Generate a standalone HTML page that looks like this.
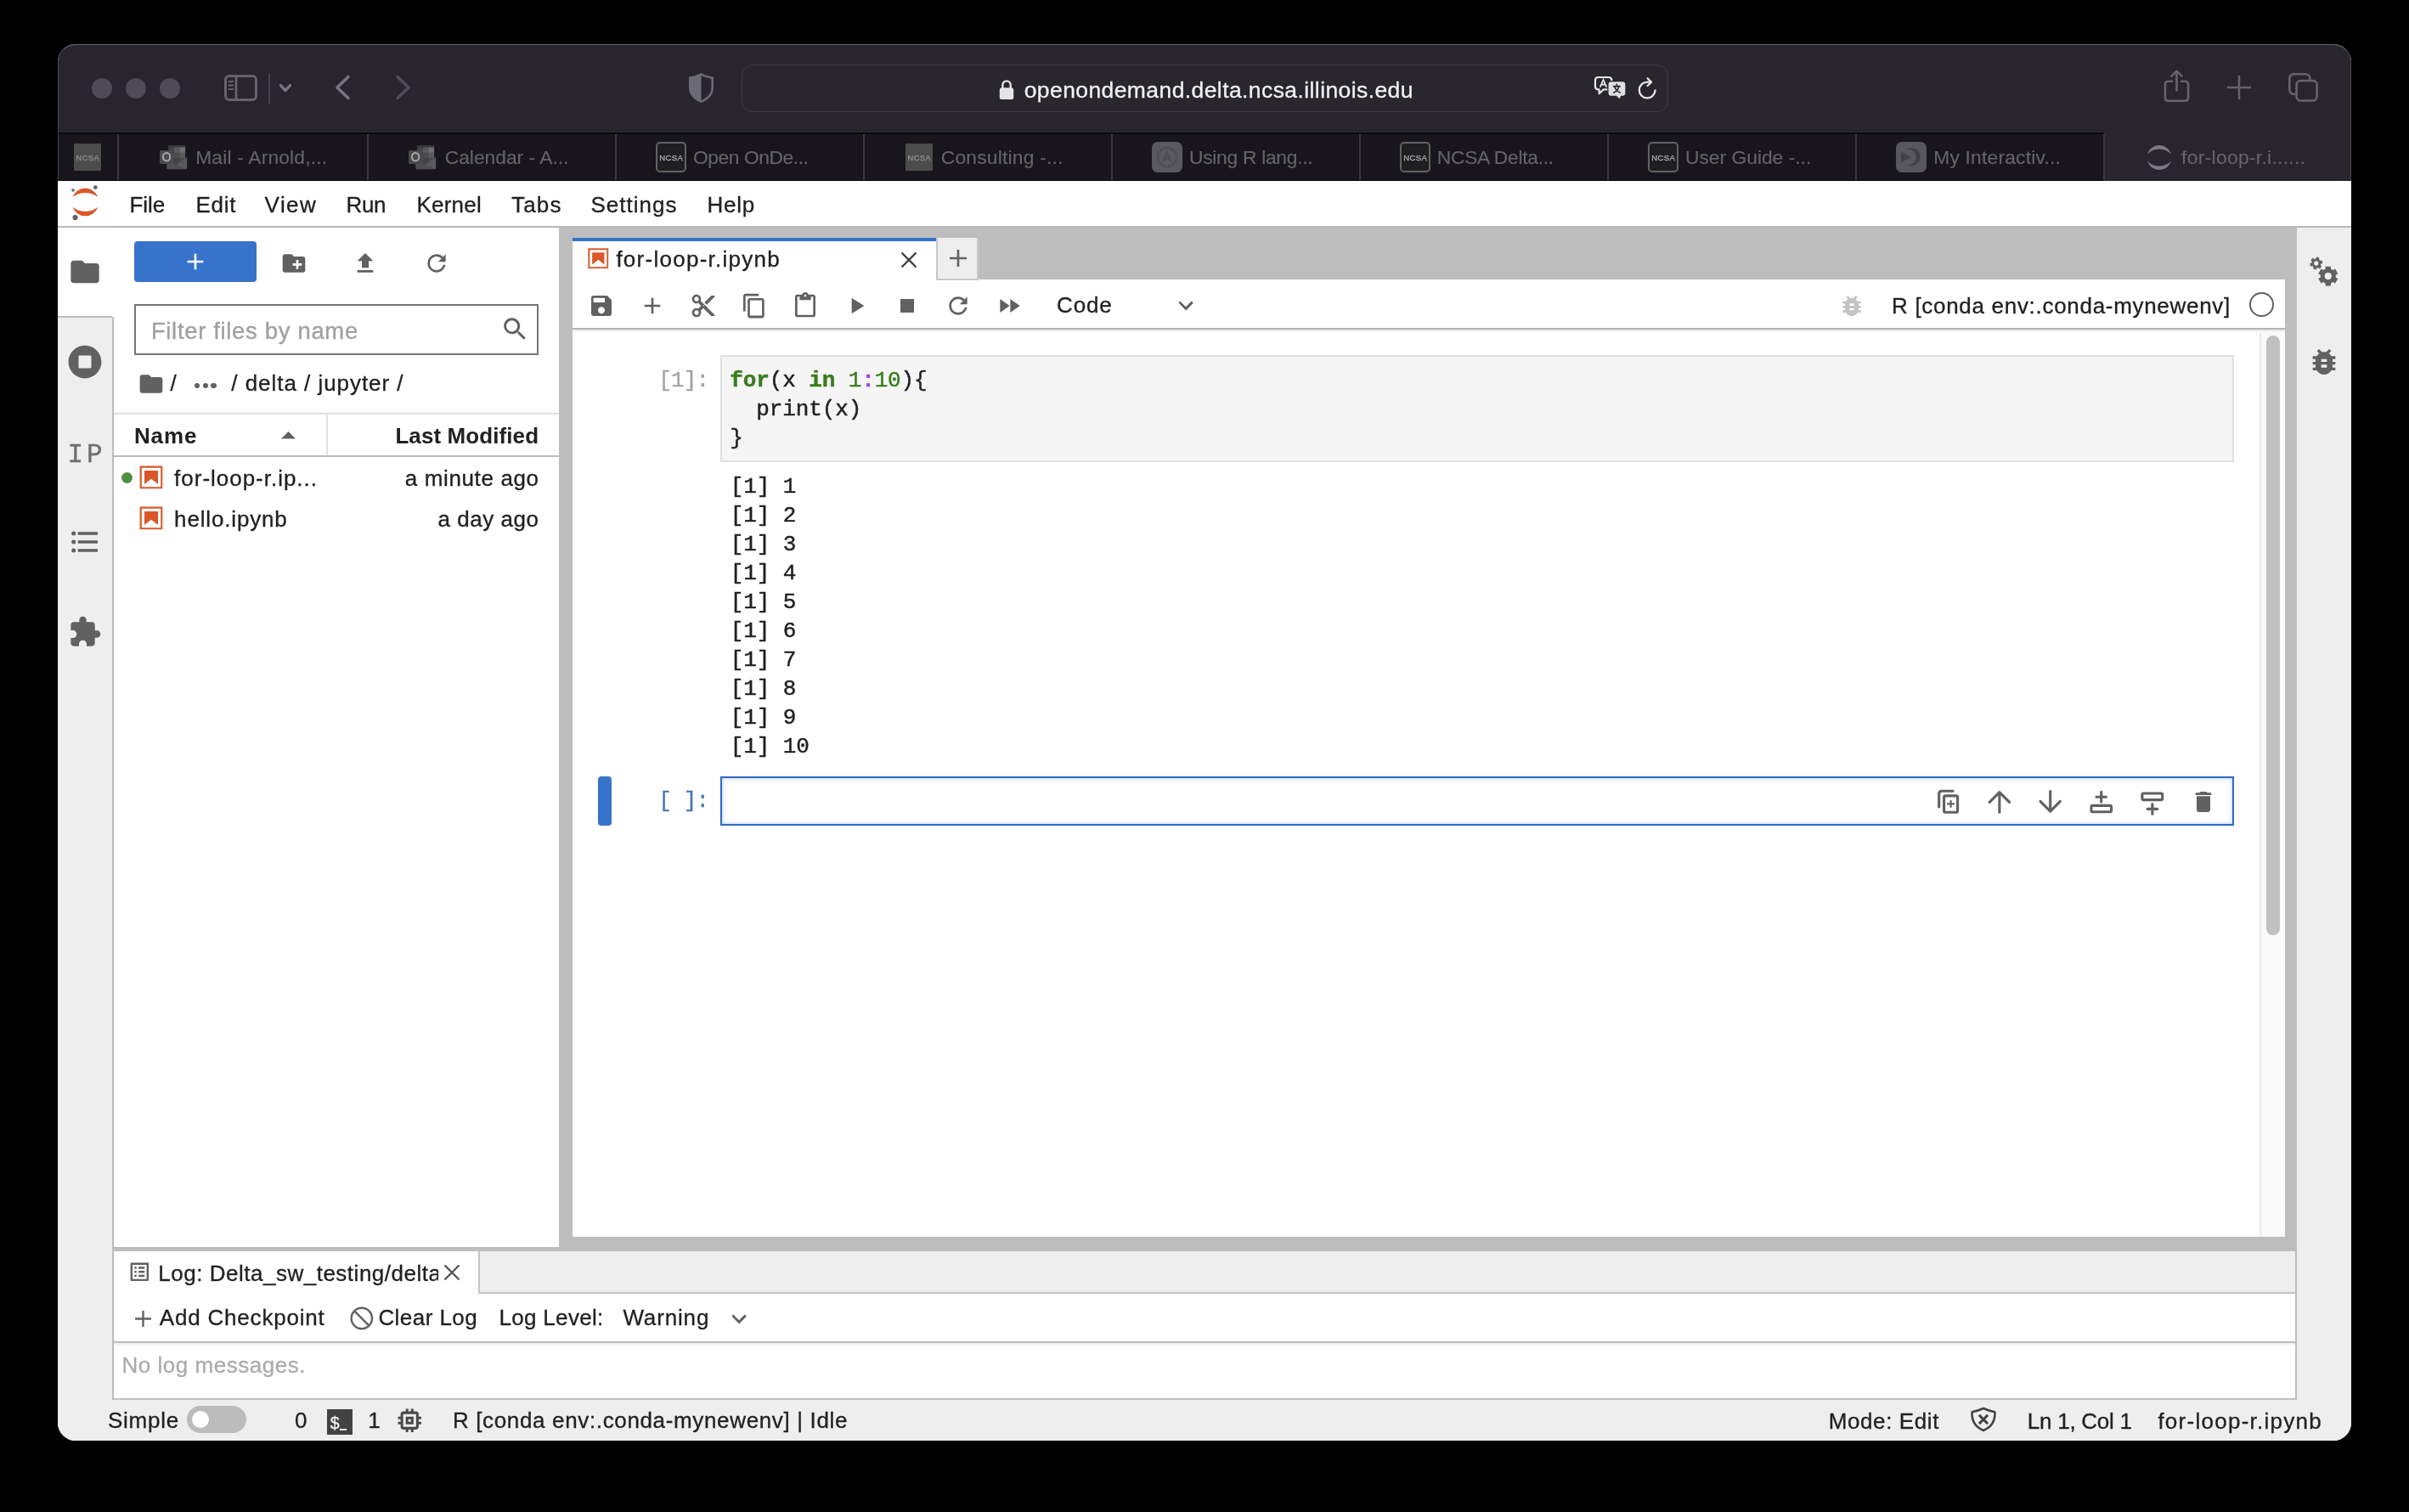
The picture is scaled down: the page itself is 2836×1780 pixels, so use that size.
<!DOCTYPE html><html><head><meta charset="utf-8"><title>JupyterLab</title><style>
*{box-sizing:border-box;margin:0;padding:0}
html,body{width:2836px;height:1780px;background:#000;overflow:hidden}
body{position:relative;font-family:"Liberation Sans",sans-serif}
.a{position:absolute}
.t{position:absolute;white-space:pre;display:block;-webkit-text-stroke:0.3px}
.m{-webkit-text-stroke:0.45px}
svg{position:absolute;overflow:visible}
#win{will-change:transform;position:absolute;left:68px;top:52px;width:2700px;height:1644px;border-radius:21px;overflow:hidden;background:#fff}
</style></head><body><div id="win"><div class="a" style="left:-68px;top:-52px;width:2836px;height:1780px">
<div class="a" style="left:68px;top:52px;width:2700px;height:104px;background:#28252f"></div>
<div class="a" style="left:68px;top:156px;width:2700px;height:57px;background:#18161c"></div>
<div class="a" style="left:68px;top:155.5px;width:2409px;height:2px;background:#0b0a0e"></div>
<div class="a" style="left:68px;top:211.5px;width:2700px;height:1.5px;background:#08070a"></div>
<div class="a" style="left:2477px;top:156px;width:291px;height:57px;background:#28252f"></div>
<div class="a" style="left:138px;top:158px;width:2px;height:54px;background:#3a3842"></div>
<div class="a" style="left:432px;top:158px;width:2px;height:54px;background:#3a3842"></div>
<div class="a" style="left:724px;top:158px;width:2px;height:54px;background:#3a3842"></div>
<div class="a" style="left:1016px;top:158px;width:2px;height:54px;background:#3a3842"></div>
<div class="a" style="left:1308px;top:158px;width:2px;height:54px;background:#3a3842"></div>
<div class="a" style="left:1600px;top:158px;width:2px;height:54px;background:#3a3842"></div>
<div class="a" style="left:1892px;top:158px;width:2px;height:54px;background:#3a3842"></div>
<div class="a" style="left:2184px;top:158px;width:2px;height:54px;background:#3a3842"></div>
<div class="a" style="left:2476px;top:158px;width:2px;height:54px;background:#3a3842"></div>
<div class="a" style="left:68px;top:52px;width:2700px;height:160px;border:1.6px solid #4b4854;border-top-color:#65626e;border-bottom:none;border-radius:21px 21px 0 0"></div>
<div class="a" style="left:107.8px;top:91.8px;width:24.4px;height:24.4px;border-radius:50%;background:#4e4b57"></div>
<div class="a" style="left:147.8px;top:91.8px;width:24.4px;height:24.4px;border-radius:50%;background:#4e4b57"></div>
<div class="a" style="left:187.8px;top:91.8px;width:24.4px;height:24.4px;border-radius:50%;background:#4e4b57"></div>
<div class="a" style="left:872.5px;top:76px;width:1091px;height:56px;border:1.7px solid #403d48;border-radius:13px;background:#29262f"></div>
<div class="a" style="left:68px;top:213px;width:2700px;height:55px;background:#fff;border-bottom:2px solid #b9b9b9"></div>
<div class="a" style="left:68px;top:268px;width:2700px;height:1380px;background:#bdbdbd"></div>
<div class="a" style="left:68px;top:268px;width:66px;height:1380px;background:#eeeeee;border-right:2px solid #bdbdbd"></div>
<div class="a" style="left:68px;top:268px;width:66px;height:105px;background:#fff"></div>
<div class="a" style="left:68px;top:372px;width:64px;height:2px;background:#bdbdbd"></div>
<div class="a" style="left:134px;top:268px;width:524px;height:1200px;background:#fff"></div>
<div class="a" style="left:2702px;top:268px;width:66px;height:1380px;background:#eeeeee;border-left:2px solid #bdbdbd"></div>
<div class="a" style="left:674px;top:280px;width:2016px;height:1176px;background:#fff"></div>
<div class="a" style="left:134px;top:1473px;width:2568px;height:175px;background:#fff"></div>
<div class="a" style="left:68px;top:1648px;width:2700px;height:48px;background:#eeeeee"></div>
<svg style="left:264px;top:87.5px" width="39" height="31" viewBox="0 0 39 31"><rect x="1.5" y="1.5" width="36" height="28" rx="4.5" fill="none" stroke="#66636c" stroke-width="3"/><path d="M14 1.5V29.5" stroke="#66636c" stroke-width="2.8"/><path d="M5.6 8H10.2M5.6 12.5H10.2M5.6 17H10.2" stroke="#66636c" stroke-width="1.9" stroke-linecap="round"/></svg>
<div class="a" style="left:315.8px;top:86px;width:2px;height:35.5px;background:#45424d"></div>
<svg style="left:329px;top:99.3px" width="14" height="10" viewBox="0 0 14 10"><path d="M1.4 1.5L7 7.6L12.6 1.5" fill="none" stroke="#7a7782" stroke-width="3.2" stroke-linecap="round" stroke-linejoin="round"/></svg>
<svg style="left:395px;top:89px" width="17" height="28" viewBox="0 0 17 28"><path d="M15 1.5L2 14L15 26.5" fill="none" stroke="#77747f" stroke-width="3.6" stroke-linecap="round" stroke-linejoin="round"/></svg>
<svg style="left:466px;top:89px" width="17" height="28" viewBox="0 0 17 28"><path d="M2 1.5L15 14L2 26.5" fill="none" stroke="#4f4c58" stroke-width="3.6" stroke-linecap="round" stroke-linejoin="round"/></svg>
<svg style="left:811px;top:86px" width="29" height="35" viewBox="0 0 29 35"><path d="M14.5 1.3C10 3.6 5.5 5 1.3 5.6V17C1.3 25 7 30.5 14.5 33.6C22 30.5 27.7 25 27.7 17V5.6C23.5 5 19 3.6 14.5 1.3z" fill="none" stroke="#6c6976" stroke-width="2.6" stroke-linejoin="round"/><path d="M14.5 1.3C10 3.6 5.5 5 1.3 5.6V17C1.3 25 7 30.5 14.5 33.6z" fill="#6c6976"/></svg>
<svg style="left:1176px;top:93px" width="18" height="25" viewBox="0 0 18 25"><path d="M4.3 11V7.2C4.3 0.8 13.7 0.8 13.7 7.2V11" fill="none" stroke="#e4e4e6" stroke-width="2.4"/><rect x="0.8" y="10.2" width="16.4" height="13.8" rx="2.6" fill="#e4e4e6"/></svg>
<span class="t" id="t0" style="left:1205.7px;top:90.2px;font:400 26.5px/32px 'Liberation Sans',sans-serif;color:#f2f2f4;letter-spacing:0.41px;">openondemand.delta.ncsa.illinois.edu</span>
<svg style="left:1876px;top:89px" width="40" height="30" viewBox="0 0 40 30"><path d="M5.5 2H17.8C19.9 2 21.3 3.4 21.3 5.5V12.8C21.3 14.9 19.9 16.3 17.8 16.3H11.8L6.6 21.2V16.3H5.5C3.4 16.3 2 14.9 2 12.8V5.5C2 3.4 3.4 2 5.5 2z" fill="none" stroke="#e6e6e8" stroke-width="2.2" stroke-linejoin="round"/><path d="M7.7 13.6L11.5 4.9L15.3 13.6M9.1 10.7H13.9" fill="none" stroke="#e6e6e8" stroke-width="1.8"/><path d="M20.6 6.7H34.3C36.4 6.7 38 8.3 38 10.4V20.7C38 22.8 36.4 24.4 34.3 24.4H32.6L30.8 28.3L26.6 24.4H20.6C18.5 24.4 16.9 22.8 16.9 20.7V10.4C16.9 8.3 18.5 6.7 20.6 6.7z" fill="#dfdfe1" stroke="#28252f" stroke-width="1.3"/><path d="M22.9 12.6H31.8M27 9.6L27.8 12.4M30 12.6C29 16.5 26 19.2 23.1 20.2M24.6 12.8C26 16.6 29 19.3 31.8 20.2" fill="none" stroke="#28252f" stroke-width="1.6"/></svg>
<svg style="left:1928px;top:91px" width="23" height="27" viewBox="0 0 23 27"><path d="M20.6 15.3A9.4 9.4 0 1 1 11.5 5.6H14.5" fill="none" stroke="#e6e6e8" stroke-width="2.3" stroke-linecap="round"/><path d="M11.6 1.2L16 5.6L11.6 10" fill="none" stroke="#e6e6e8" stroke-width="2.3" stroke-linecap="round" stroke-linejoin="round"/></svg>
<svg style="left:2547px;top:82px" width="31" height="39" viewBox="0 0 31 39"><path d="M10 13.8H5.6C3.2 13.8 1.9 15.1 1.9 17.5V33C1.9 35.4 3.2 36.7 5.6 36.7H25.4C27.8 36.7 29.1 35.4 29.1 33V17.5C29.1 15.1 27.8 13.8 25.4 13.8H21" fill="none" stroke="#66636c" stroke-width="2.6" stroke-linecap="round"/><path d="M15.5 24.5V2M9.5 7.5L15.5 1.6L21.5 7.5" fill="none" stroke="#66636c" stroke-width="2.6" stroke-linecap="round" stroke-linejoin="round"/></svg>
<svg style="left:2622px;top:89px" width="28" height="28" viewBox="0 0 28 28"><path d="M14 1V27M1 14H27" stroke="#66636c" stroke-width="2.6" stroke-linecap="round"/></svg>
<svg style="left:2693px;top:85px" width="37" height="36" viewBox="0 0 37 36"><rect x="2.3" y="2.3" width="24" height="23.5" rx="5" fill="none" stroke="#66636c" stroke-width="2.6"/><rect x="10.6" y="10" width="24" height="23.5" rx="5" fill="#28252f" stroke="#66636c" stroke-width="2.6"/></svg>
<span class="t" id="t1" style="left:230.2px;top:172.3px;font:400 22.8px/27px 'Liberation Sans',sans-serif;color:#66636c;letter-spacing:0.18px;-webkit-text-stroke:0.12px;">Mail - Arnold,...</span>
<span class="t" id="t2" style="left:523.7px;top:172.3px;font:400 22.8px/27px 'Liberation Sans',sans-serif;color:#66636c;-webkit-text-stroke:0.12px;">Calendar - A...</span>
<span class="t" id="t3" style="left:815.9px;top:172.3px;font:400 22.8px/27px 'Liberation Sans',sans-serif;color:#66636c;letter-spacing:-0.42px;-webkit-text-stroke:0.12px;">Open OnDe...</span>
<span class="t" id="t4" style="left:1107.8px;top:172.3px;font:400 22.8px/27px 'Liberation Sans',sans-serif;color:#66636c;letter-spacing:0.21px;-webkit-text-stroke:0.12px;">Consulting -...</span>
<span class="t" id="t5" style="left:1400.0px;top:172.3px;font:400 22.8px/27px 'Liberation Sans',sans-serif;color:#66636c;letter-spacing:-0.28px;-webkit-text-stroke:0.12px;">Using R lang...</span>
<span class="t" id="t6" style="left:1691.8px;top:172.3px;font:400 22.8px/27px 'Liberation Sans',sans-serif;color:#66636c;letter-spacing:-0.28px;-webkit-text-stroke:0.12px;">NCSA Delta...</span>
<span class="t" id="t7" style="left:1984.0px;top:172.3px;font:400 22.8px/27px 'Liberation Sans',sans-serif;color:#66636c;-webkit-text-stroke:0.12px;">User Guide -...</span>
<span class="t" id="t8" style="left:2276.2px;top:172.3px;font:400 22.8px/27px 'Liberation Sans',sans-serif;color:#66636c;letter-spacing:0.21px;-webkit-text-stroke:0.12px;">My Interactiv...</span>
<span class="t" id="t9" style="left:2568.1px;top:172.3px;font:400 22.8px/27px 'Liberation Sans',sans-serif;color:#66636c;letter-spacing:0.31px;-webkit-text-stroke:0.12px;">for-loop-r.i......</span>
<div class="a" style="left:87px;top:169px;width:32px;height:32px;background:#4c4c4c"></div>
<span class="t" id="t10" style="left:89.6px;top:180.4px;font:400 9.4px/11px 'Liberation Sans',sans-serif;color:#919191;letter-spacing:0.36px;-webkit-text-stroke:0.25px;">NCSA</span>
<svg style="left:187.9px;top:171px" width="32.2" height="28.2" viewBox="0 0 32.2 28.2"><rect x="10.2" y="0.2" width="19.9" height="24" rx="1" fill="#444446"/><rect x="10.2" y="0.2" width="19.9" height="2.4" rx="1" fill="#3a3a3c"/><rect x="16.9" y="2.6" width="6.8" height="6.3" fill="#59595b"/><rect x="23.7" y="2.6" width="6.4" height="6.3" fill="#707072"/><rect x="16.9" y="8.9" width="6.8" height="6" fill="#4e4e50"/><rect x="23.7" y="8.9" width="6.4" height="6" fill="#5c5c5e"/><rect x="16.9" y="14.9" width="6.8" height="8" fill="#434345"/><rect x="23.7" y="14.9" width="6.4" height="6" fill="#4b4b4d"/><path d="M8.2 17L20 23.4L32.1 13.9V26.6C32.1 27.5 31.4 28.2 30.5 28.2H9.8C8.9 28.2 8.2 27.5 8.2 26.6z" fill="#4f4f51"/><path d="M32.1 13.9V26.6C32.1 27.3 31.8 27.8 31.3 28L19.6 23.1z" fill="#5a5a5c"/><rect x="0" y="5.9" width="16.4" height="16" rx="1.6" fill="#4a4a4c"/><ellipse cx="8.1" cy="13.8" rx="4.2" ry="4.7" fill="none" stroke="#a9a9ab" stroke-width="2"/></svg>
<svg style="left:481.4px;top:171px" width="32.2" height="28.2" viewBox="0 0 32.2 28.2"><rect x="10.2" y="0.2" width="19.9" height="24" rx="1" fill="#444446"/><rect x="10.2" y="0.2" width="19.9" height="2.4" rx="1" fill="#3a3a3c"/><rect x="16.9" y="2.6" width="6.8" height="6.3" fill="#59595b"/><rect x="23.7" y="2.6" width="6.4" height="6.3" fill="#707072"/><rect x="16.9" y="8.9" width="6.8" height="6" fill="#4e4e50"/><rect x="23.7" y="8.9" width="6.4" height="6" fill="#5c5c5e"/><rect x="16.9" y="14.9" width="6.8" height="8" fill="#434345"/><rect x="23.7" y="14.9" width="6.4" height="6" fill="#4b4b4d"/><path d="M8.2 17L20 23.4L32.1 13.9V26.6C32.1 27.5 31.4 28.2 30.5 28.2H9.8C8.9 28.2 8.2 27.5 8.2 26.6z" fill="#4f4f51"/><path d="M32.1 13.9V26.6C32.1 27.3 31.8 27.8 31.3 28L19.6 23.1z" fill="#5a5a5c"/><rect x="0" y="5.9" width="16.4" height="16" rx="1.6" fill="#4a4a4c"/><ellipse cx="8.1" cy="13.8" rx="4.2" ry="4.7" fill="none" stroke="#a9a9ab" stroke-width="2"/></svg>
<div class="a" style="left:772px;top:167px;width:36px;height:36px;background:#1f1f21;border:2px solid #626266;border-radius:5px"></div>
<span class="t" id="t11" style="left:776.2px;top:180.1px;font:400 9.6px/12px 'Liberation Sans',sans-serif;color:#b4b4b6;letter-spacing:0.37px;-webkit-text-stroke:0.25px;">NCSA</span>
<div class="a" style="left:1066px;top:169px;width:32px;height:32px;background:#4c4c4c"></div>
<span class="t" id="t12" style="left:1068.6px;top:180.4px;font:400 9.4px/11px 'Liberation Sans',sans-serif;color:#919191;letter-spacing:0.36px;-webkit-text-stroke:0.25px;">NCSA</span>
<div class="a" style="left:1356px;top:167px;width:36px;height:36px;background:#5b5960;border-radius:7px"></div>
<svg style="left:1360px;top:171px" width="28" height="28" viewBox="0 0 28 28"><circle cx="14" cy="14" r="11" fill="none" stroke="#514f56" stroke-width="3"/><path d="M9.5 19.5L14 8.5L18.5 19.5M11 16H17" fill="none" stroke="#4f4d54" stroke-width="2.4"/></svg>
<div class="a" style="left:1648px;top:167px;width:36px;height:36px;background:#1f1f21;border:2px solid #626266;border-radius:5px"></div>
<span class="t" id="t13" style="left:1652.2px;top:180.1px;font:400 9.6px/12px 'Liberation Sans',sans-serif;color:#b4b4b6;letter-spacing:0.37px;-webkit-text-stroke:0.25px;">NCSA</span>
<div class="a" style="left:1940px;top:167px;width:36px;height:36px;background:#1f1f21;border:2px solid #626266;border-radius:5px"></div>
<span class="t" id="t14" style="left:1944.2px;top:180.1px;font:400 9.6px/12px 'Liberation Sans',sans-serif;color:#b4b4b6;letter-spacing:0.37px;-webkit-text-stroke:0.25px;">NCSA</span>
<div class="a" style="left:2232px;top:167px;width:36px;height:36px;background:#59575e;border-radius:7px"></div>
<svg style="left:2232px;top:167px" width="36" height="36" viewBox="0 0 36 36"><path d="M6 11.5L17 18L6 24.5z" fill="#434148"/><path d="M12 8.5C22 4.5 30 11 28.6 19.5C27.5 26 20 30 12 27.5C19 27.8 23.5 23.5 23.5 18C23.5 12.5 19 8.4 12 8.5z" fill="#434148"/></svg>
<svg style="left:2527px;top:169.5px" width="30" height="31" viewBox="0 0 30 31"><path d="M1 11.5C6 -2.5 24 -2.5 29 11.5C22 3.5 8 3.5 1 11.5z" fill="#7d7a85"/><path d="M1 19.5C6 33.5 24 33.5 29 19.5C22 27.5 8 27.5 1 19.5z" fill="#7d7a85"/></svg>
<span class="t" id="t15" style="left:152.4px;top:226.3px;font:400 26px/31px 'Liberation Sans',sans-serif;color:#212121;">File</span>
<span class="t" id="t16" style="left:230.4px;top:226.3px;font:400 26px/31px 'Liberation Sans',sans-serif;color:#212121;letter-spacing:0.77px;">Edit</span>
<span class="t" id="t17" style="left:311.6px;top:226.3px;font:400 26px/31px 'Liberation Sans',sans-serif;color:#212121;letter-spacing:1.44px;">View</span>
<span class="t" id="t18" style="left:407.4px;top:226.3px;font:400 26px/31px 'Liberation Sans',sans-serif;color:#212121;letter-spacing:-0.29px;">Run</span>
<span class="t" id="t19" style="left:490.4px;top:226.3px;font:400 26px/31px 'Liberation Sans',sans-serif;color:#212121;letter-spacing:0.23px;">Kernel</span>
<span class="t" id="t20" style="left:602.0px;top:226.3px;font:400 26px/31px 'Liberation Sans',sans-serif;color:#212121;letter-spacing:1.20px;">Tabs</span>
<span class="t" id="t21" style="left:695.4px;top:226.3px;font:400 26px/31px 'Liberation Sans',sans-serif;color:#212121;letter-spacing:1.02px;">Settings</span>
<span class="t" id="t22" style="left:832.4px;top:226.3px;font:400 26px/31px 'Liberation Sans',sans-serif;color:#212121;letter-spacing:0.81px;">Help</span>
<svg style="left:80px;top:214px" width="44" height="50" viewBox="80 214 44 50"><path d="M85.6 232A15.68 15.68 0 0 1 115.2 232A24.8 24.8 0 0 0 85.6 232z" fill="#d9582a"/><path d="M85.6 243.7A15.6 15.6 0 0 0 115.2 243.7A23.7 23.7 0 0 1 85.6 243.7z" fill="#d9582a"/><circle cx="112.3" cy="220.6" r="2.4" fill="#616161"/><circle cx="88.5" cy="256.1" r="3.1" fill="#616161"/><circle cx="86" cy="223.9" r="1.8" fill="#6a6a6a"/></svg>
<svg style="left:80.0px;top:300.0px" width="40" height="40" viewBox="0 0 24 24" ><path d="M10 4H4c-1.1 0-1.99.9-1.99 2L2 18c0 1.1.9 2 2 2h16c1.1 0 2-.9 2-2V8c0-1.1-.9-2-2-2h-8l-2-2z" fill="#616161" /></svg>
<svg style="left:80.0px;top:405.5px" width="40" height="40" viewBox="0 0 512 512" ><path d="M256 8C119 8 8 119 8 256s111 248 248 248 248-111 248-248S393 8 256 8zm96 328c0 8.8-7.2 16-16 16H176c-8.8 0-16-7.2-16-16V176c0-8.8 7.2-16 16-16h160c8.8 0 16 7.2 16 16v160z" fill="#616161" /></svg>
<span class="t" id="t23" style="left:79.5px;top:517.2px;font:400 31px/37px 'Liberation Mono',monospace;color:#6e6e6e;letter-spacing:3.78px;">IP</span>
<svg style="left:80.0px;top:618.0px" width="40" height="40" viewBox="0 0 24 24" ><path d="M7,5H21V7H7V5M7,13V11H21V13H7M4,4.5A1.5,1.5 0 0,1 5.5,6A1.5,1.5 0 0,1 4,7.5A1.5,1.5 0 0,1 2.5,6A1.5,1.5 0 0,1 4,4.5M4,10.5A1.5,1.5 0 0,1 5.5,12A1.5,1.5 0 0,1 4,13.5A1.5,1.5 0 0,1 2.5,12A1.5,1.5 0 0,1 4,10.5M7,19V17H21V19H7M4,16.5A1.5,1.5 0 0,1 5.5,18A1.5,1.5 0 0,1 4,19.5A1.5,1.5 0 0,1 2.5,18A1.5,1.5 0 0,1 4,16.5Z" fill="#616161" /></svg>
<svg style="left:80.0px;top:724.0px" width="40" height="40" viewBox="0 0 24 24" ><path d="M20.5 11H19V7c0-1.1-.9-2-2-2h-4V3.5C13 2.12 11.88 1 10.5 1S8 2.12 8 3.5V5H4c-1.1 0-1.99.9-1.99 2v3.8H3.5c1.49 0 2.7 1.21 2.7 2.7s-1.21 2.7-2.7 2.7H2V20c0 1.1.9 2 2 2h3.8v-1.5c0-1.49 1.21-2.7 2.7-2.7 1.49 0 2.7 1.21 2.7 2.7V22H17c1.1 0 2-.9 2-2v-4h1.5c1.38 0 2.5-1.12 2.5-2.5S21.88 11 20.5 11z" fill="#616161" /></svg>
<svg style="left:2704px;top:290px" width="64" height="60" viewBox="2704 290 64 60"><path fill-rule="evenodd" fill="#616161" d="M2737.57 316.70L2737.61 313.64L2743.99 313.64L2744.03 316.70A9.00 9.00 0 0 1 2746.46 318.11L2749.13 316.61L2752.32 322.13L2749.69 323.69A9.00 9.00 0 0 1 2749.69 326.51L2752.32 328.07L2749.13 333.59L2746.46 332.09A9.00 9.00 0 0 1 2744.03 333.50L2743.99 336.56L2737.61 336.56L2737.57 333.50A9.00 9.00 0 0 1 2735.14 332.09L2732.47 333.59L2729.28 328.07L2731.91 326.51A9.00 9.00 0 0 1 2731.91 323.69L2729.28 322.13L2732.47 316.61L2735.14 318.11A9.00 9.00 0 0 1 2737.57 316.70ZM2736.70 325.10A4.10 4.10 0 1 0 2744.90 325.10A4.10 4.10 0 1 0 2736.70 325.10Z"/><path fill-rule="evenodd" fill="#616161" d="M2726.44 304.41L2726.85 302.40L2730.53 303.38L2729.89 305.33A5.60 5.60 0 0 1 2731.46 306.89L2733.41 306.24L2734.40 309.92L2732.39 310.34A5.60 5.60 0 0 1 2731.82 312.48L2733.36 313.84L2730.67 316.54L2729.30 315.01A5.60 5.60 0 0 1 2727.16 315.59L2726.75 317.60L2723.07 316.62L2723.71 314.67A5.60 5.60 0 0 1 2722.14 313.11L2720.19 313.76L2719.20 310.08L2721.21 309.66A5.60 5.60 0 0 1 2721.78 307.52L2720.24 306.16L2722.93 303.46L2724.30 304.99A5.60 5.60 0 0 1 2726.44 304.41ZM2724.20 310.00A2.60 2.60 0 1 0 2729.40 310.00A2.60 2.60 0 1 0 2724.20 310.00Z"/></svg>
<svg style="left:2716.0px;top:406.0px" width="40" height="40" viewBox="0 0 24 24" ><path d="M20 8h-2.81c-.45-.78-1.07-1.45-1.82-1.96L17 4.41 15.59 3l-2.17 2.17C12.96 5.06 12.49 5 12 5c-.49 0-.96.06-1.41.17L8.41 3 7 4.41l1.62 1.63C7.88 6.55 7.26 7.22 6.81 8H4v2h2.09c-.05.33-.09.66-.09 1v1H4v2h2v1c0 .34.04.67.09 1H4v2h2.81c1.04 1.79 2.97 3 5.19 3s4.15-1.21 5.19-3H20v-2h-2.09c.05-.33.09-.66.09-1v-1h2v-2h-2v-1c0-.34-.04-.67-.09-1H20V8zm-6 8h-4v-2h4v2zm0-4h-4v-2h4v2z" fill="#616161" /></svg>
<div class="a" style="left:158px;top:284px;width:144px;height:48px;background:#3873cb;border-radius:4px"></div>
<svg style="left:214.0px;top:292.0px" width="32" height="32" viewBox="0 0 24 24" ><path d="M19 13h-6v6h-2v-6H5v-2h6V5h2v6h6v2z" fill="#fff" /></svg>
<svg style="left:330.0px;top:294.0px" width="32" height="32" viewBox="0 0 24 24" ><path d="M20 6h-8l-2-2H4c-1.11 0-1.99.89-1.99 2L2 18c0 1.11.89 2 2 2h16c1.11 0 2-.89 2-2V8c0-1.11-.89-2-2-2zm-1 8h-3v3h-2v-3h-3v-2h3V9h2v3h3v2z" fill="#616161" /></svg>
<svg style="left:414.0px;top:294.0px" width="32" height="32" viewBox="0 0 24 24" ><path d="M9 16h6v-6h4l-7-7-7 7h4zm-4 2h14v2H5z" fill="#616161" /></svg>
<svg style="left:498.0px;top:294.0px" width="32" height="32" viewBox="0 0 18 18" ><path d="M9 13.5c-2.49 0-4.5-2.01-4.5-4.5S6.51 4.5 9 4.5c1.24 0 2.36.52 3.17 1.33L10 8h5V3l-1.76 1.76C12.15 3.68 10.66 3 9 3 5.69 3 3.01 5.69 3.01 9S5.69 15 9 15c2.97 0 5.43-2.16 5.9-5h-1.52c-.46 2-2.24 3.5-4.38 3.5z" fill="#616161" /></svg>
<div class="a" style="left:158px;top:358px;width:476px;height:60px;border:2px solid #757575;background:#fff"></div>
<span class="t" id="t24" style="left:177.9px;top:373.4px;font:400 27.5px/33px 'Liberation Sans',sans-serif;color:#a0a0a0;letter-spacing:0.66px;">Filter files by name</span>
<svg style="left:590.0px;top:370.5px" width="32" height="32" viewBox="0 0 18 18" ><path d="M12.1,10.9h-0.7l-0.2-0.2c0.8-0.9,1.3-2.2,1.3-3.5c0-3-2.4-5.4-5.4-5.4S1.8,4.2,1.8,7.1s2.4,5.4,5.4,5.4 c1.3,0,2.5-0.5,3.5-1.3l0.2,0.2v0.7l4.1,4.1l1.2-1.2L12.1,10.9z M7.1,10.9c-2.1,0-3.7-1.7-3.7-3.7s1.7-3.7,3.7-3.7s3.7,1.7,3.7,3.7 S9.2,10.9,7.1,10.9z" fill="#616161" /></svg>
<svg style="left:162.0px;top:436.0px" width="32" height="32" viewBox="0 0 24 24" ><path d="M10 4H4c-1.1 0-1.99.9-1.99 2L2 18c0 1.1.9 2 2 2h16c1.1 0 2-.9 2-2V8c0-1.1-.9-2-2-2h-8l-2-2z" fill="#616161" /></svg>
<span class="t" id="t25" style="left:200.4px;top:435.6px;font:400 26px/31px 'Liberation Sans',sans-serif;color:#212121;">/</span>
<div class="a" style="left:229.1px;top:450.6px;width:6.2px;height:6.2px;border-radius:50%;background:#616161"></div>
<div class="a" style="left:238.8px;top:450.6px;width:6.2px;height:6.2px;border-radius:50%;background:#616161"></div>
<div class="a" style="left:248.4px;top:450.6px;width:6.2px;height:6.2px;border-radius:50%;background:#616161"></div>
<span class="t" id="t26" style="left:272.3px;top:435.6px;font:400 26px/31px 'Liberation Sans',sans-serif;color:#212121;letter-spacing:0.96px;">/ delta / jupyter /</span>
<div class="a" style="left:134px;top:486px;width:524px;height:2px;background:#e0e0e0"></div>
<div class="a" style="left:134px;top:536px;width:524px;height:2px;background:#bdbdbd"></div>
<div class="a" style="left:384px;top:488px;width:2px;height:48px;background:#e0e0e0"></div>
<span class="t" id="t27" style="left:157.9px;top:498.0px;font:700 26px/31px 'Liberation Sans',sans-serif;color:#212121;letter-spacing:0.93px;-webkit-text-stroke:0;">Name</span>
<svg style="left:331px;top:507.5px" width="17" height="8.5" viewBox="0 0 17 8.5"><path d="M0 8.5L8.5 0L17 8.5z" fill="#616161"/></svg>
<span class="t" id="t28" style="left:465.4px;top:498.0px;font:700 26px/31px 'Liberation Sans',sans-serif;color:#212121;letter-spacing:0.09px;-webkit-text-stroke:0;">Last Modified</span>
<div class="a" style="left:143px;top:555.5px;width:13px;height:13px;border-radius:50%;background:#4f8f3e"></div>
<svg style="left:162.0px;top:546.0px" width="32" height="32" viewBox="0 0 22 22" ><g fill="#d9582a"><path d="M18.7 3.3v15.4H3.3V3.3h15.4m1.5-1.5H1.8v18.3h18.3l.1-18.3z"/><path d="M16.5 16.5l-5.4-4.3-5.6 4.3v-11h11z"/></g></svg>
<span class="t" id="t29" style="left:205.1px;top:547.6px;font:400 26px/31px 'Liberation Sans',sans-serif;color:#212121;letter-spacing:0.98px;">for-loop-r.ip...</span>
<span class="t" id="t30" style="left:476.8px;top:547.6px;font:400 26px/31px 'Liberation Sans',sans-serif;color:#212121;letter-spacing:0.63px;">a minute ago</span>
<svg style="left:162.0px;top:594.0px" width="32" height="32" viewBox="0 0 22 22" ><g fill="#d9582a"><path d="M18.7 3.3v15.4H3.3V3.3h15.4m1.5-1.5H1.8v18.3h18.3l.1-18.3z"/><path d="M16.5 16.5l-5.4-4.3-5.6 4.3v-11h11z"/></g></svg>
<span class="t" id="t31" style="left:205.1px;top:596.0px;font:400 26px/31px 'Liberation Sans',sans-serif;color:#212121;letter-spacing:0.84px;">hello.ipynb</span>
<span class="t" id="t32" style="left:515.4px;top:596.0px;font:400 26px/31px 'Liberation Sans',sans-serif;color:#212121;letter-spacing:0.55px;">a day ago</span>
<div class="a" style="left:674px;top:280px;width:2016px;height:49px;background:#bdbdbd"></div>
<div class="a" style="left:674px;top:280px;width:428px;height:49px;background:#fff"></div>
<div class="a" style="left:674px;top:280px;width:428px;height:4px;background:#3873cb"></div>
<svg style="left:689.7px;top:289.7px" width="28.6" height="28.6" viewBox="0 0 22 22" ><g fill="#d9582a"><path d="M18.7 3.3v15.4H3.3V3.3h15.4m1.5-1.5H1.8v18.3h18.3l.1-18.3z"/><path d="M16.5 16.5l-5.4-4.3-5.6 4.3v-11h11z"/></g></svg>
<span class="t" id="t33" style="left:725.4px;top:290.3px;font:400 26px/31px 'Liberation Sans',sans-serif;color:#212121;letter-spacing:1.26px;">for-loop-r.ipynb</span>
<svg style="left:1061px;top:297px" width="18" height="18" viewBox="0 0 18 18"><path d="M0.5 0.5L17.5 17.5M17.5 0.5L0.5 17.5" stroke="#424242" stroke-width="2.4" fill="none"/></svg>
<div class="a" style="left:1102px;top:280px;width:50px;height:50px;background:#eeeeee;border:2px solid #c8c8c8;border-top:none"></div>
<svg style="left:1118px;top:294px" width="20" height="20" viewBox="0 0 20 20"><path d="M10 0V20M0 10H20" stroke="#616161" stroke-width="2.6" fill="none"/></svg>
<div class="a" style="left:674px;top:386px;width:2016px;height:2px;background:#b4b4b4"></div>
<div class="a" style="left:674px;top:388px;width:2016px;height:4px;background:linear-gradient(rgba(0,0,0,.10),rgba(0,0,0,0))"></div>
<svg style="left:692.0px;top:343.5px" width="32" height="32" viewBox="0 0 24 24" ><path d="M17 3H5c-1.11 0-2 .9-2 2v14c0 1.1.89 2 2 2h14c1.1 0 2-.9 2-2V7l-4-4zm-5 16c-1.66 0-3-1.34-3-3s1.34-3 3-3 3 1.34 3 3-1.34 3-3 3zm3-10H5V5h10v4z" fill="#616161" /></svg>
<svg style="left:752.0px;top:343.5px" width="32" height="32" viewBox="0 0 24 24" ><path d="M19 13h-6v6h-2v-6H5v-2h6V5h2v6h6v2z" fill="#616161" /></svg>
<svg style="left:812.0px;top:343.5px" width="32" height="32" viewBox="0 0 24 24" ><path d="M9.64 7.64c.23-.5.36-1.05.36-1.64 0-2.21-1.79-4-4-4S2 3.79 2 6s1.79 4 4 4c.59 0 1.14-.13 1.64-.36L10 12l-2.36 2.36C7.14 14.13 6.59 14 6 14c-2.21 0-4 1.79-4 4s1.79 4 4 4 4-1.79 4-4c0-.59-.13-1.14-.36-1.64L12 14l7 7h3v-1L9.64 7.64zM6 8c-1.1 0-2-.89-2-2s.9-2 2-2 2 .89 2 2-.9 2-2 2zm0 12c-1.1 0-2-.89-2-2s.9-2 2-2 2 .89 2 2-.9 2-2 2zm6-7.5c-.28 0-.5-.22-.5-.5s.22-.5.5-.5.5.22.5.5-.22.5-.5.5zM19 3l-6 6 2 2 7-7V3z" fill="#616161" /></svg>
<svg style="left:872.0px;top:343.5px" width="32" height="32" viewBox="0 0 18 18" ><path d="M11.9,1H3.2C2.4,1,1.7,1.7,1.7,2.5v10.2h1.5V2.5h8.7V1z M14.1,3.9h-8c-0.8,0-1.5,0.7-1.5,1.5v10.2c0,0.8,0.7,1.5,1.5,1.5h8 c0.8,0,1.5-0.7,1.5-1.5V5.4C15.5,4.6,14.9,3.9,14.1,3.9z M14.1,15.5h-8V5.4h8V15.5z" fill="#616161" /></svg>
<svg style="left:932.0px;top:343.5px" width="32" height="32" viewBox="0 0 24 24" ><path d="M19 2h-4.18C14.4.84 13.3 0 12 0c-1.3 0-2.4.84-2.82 2H5c-1.1 0-2 .9-2 2v16c0 1.1.9 2 2 2h14c1.1 0 2-.9 2-2V4c0-1.1-.9-2-2-2zm-7 0c.55 0 1 .45 1 1s-.45 1-1 1-1-.45-1-1 .45-1 1-1zm7 18H5V4h2v3h10V4h2v16z" fill="#616161" /></svg>
<svg style="left:992.0px;top:343.5px" width="32" height="32" viewBox="0 0 24 24" ><path d="M8 5v14l11-7z" fill="#616161" /></svg>
<svg style="left:1052.0px;top:343.5px" width="32" height="32" viewBox="0 0 24 24" ><path d="M6 6h12v12H6z" fill="#616161" /></svg>
<svg style="left:1112.0px;top:343.5px" width="32" height="32" viewBox="0 0 18 18" ><path d="M9 13.5c-2.49 0-4.5-2.01-4.5-4.5S6.51 4.5 9 4.5c1.24 0 2.36.52 3.17 1.33L10 8h5V3l-1.76 1.76C12.15 3.68 10.66 3 9 3 5.69 3 3.01 5.69 3.01 9S5.69 15 9 15c2.97 0 5.43-2.16 5.9-5h-1.52c-.46 2-2.24 3.5-4.38 3.5z" fill="#616161" /></svg>
<svg style="left:1172.0px;top:343.5px" width="32" height="32" viewBox="0 0 24 24" ><path d="M4 18l8.5-6L4 6v12zm9-12v12l8.5-6L13 6z" fill="#616161" /></svg>
<span class="t" id="t34" style="left:1244.0px;top:343.5px;font:400 26px/31px 'Liberation Sans',sans-serif;color:#212121;letter-spacing:0.89px;">Code</span>
<svg style="left:1380.0px;top:344.2px" width="32" height="32" viewBox="0 0 18 18" ><path d="M5.2,5.9L9,9.7l3.8-3.8l1.2,1.2l-4.9,5l-4.9-5L5.2,5.9z" fill="#616161" /></svg>
<svg style="left:2164.0px;top:344.0px" width="32" height="32" viewBox="0 0 24 24" ><path d="M20 8h-2.81c-.45-.78-1.07-1.45-1.82-1.96L17 4.41 15.59 3l-2.17 2.17C12.96 5.06 12.49 5 12 5c-.49 0-.96.06-1.41.17L8.41 3 7 4.41l1.62 1.63C7.88 6.55 7.26 7.22 6.81 8H4v2h2.09c-.05.33-.09.66-.09 1v1H4v2h2v1c0 .34.04.67.09 1H4v2h2.81c1.04 1.79 2.97 3 5.19 3s4.15-1.21 5.19-3H20v-2h-2.09c.05-.33.09-.66.09-1v-1h2v-2h-2v-1c0-.34-.04-.67-.09-1H20V8zm-6 8h-4v-2h4v2zm0-4h-4v-2h4v2z" fill="#c4c4c4" /></svg>
<span class="t" id="t35" style="left:2227.0px;top:345.3px;font:400 26px/31px 'Liberation Sans',sans-serif;color:#212121;letter-spacing:0.70px;">R [conda env:.conda-mynewenv]</span>
<div class="a" style="left:2648px;top:344px;width:28.5px;height:28.5px;border-radius:50%;border:2.5px solid #616161"></div>
<div class="a" style="left:2660px;top:392px;width:30px;height:1064px;background:#fafafa;border-left:2px solid #e8e8e8"></div>
<div class="a" style="left:2668px;top:395px;width:16px;height:706px;background:#c1c1c1;border-radius:8px"></div>
<span class="t" id="t36" style="left:775.3px;top:432.9px;font:400 26px/31px 'Liberation Mono',monospace;color:#a3a3a3;letter-spacing:-0.87px;">[1]:</span>
<div class="a" style="left:848px;top:418px;width:1782px;height:126px;background:#f5f5f5;border:2px solid #e0e0e0"></div>
<div class="a m" style="left:859.3px;top:431.4px;font:400 26px/34px 'Liberation Mono',monospace;color:#212121;white-space:pre;letter-spacing:-0.12px"><span style="color:#3a7d1c;font-weight:700">for</span>(x <span style="color:#3a7d1c;font-weight:700">in</span> <span style="color:#3a7d1c">1</span><span style="color:#a33cf2;font-weight:700">:</span><span style="color:#3a7d1c">10</span>){
  print(x)
}</div>
<div class="a m" style="left:859.8px;top:555.6px;font:400 26px/34px 'Liberation Mono',monospace;color:#212121;white-space:pre;letter-spacing:-0.12px">[1] 1
[1] 2
[1] 3
[1] 4
[1] 5
[1] 6
[1] 7
[1] 8
[1] 9
[1] 10</div>
<div class="a" style="left:704px;top:914px;width:16px;height:58px;background:#3873cb;border-radius:4px"></div>
<span class="t" id="t37" style="left:775.3px;top:928.0px;font:400 26px/31px 'Liberation Mono',monospace;color:#4679b8;letter-spacing:-0.87px;">[ ]:</span>
<div class="a" style="left:848px;top:914px;width:1782px;height:58px;background:#fff;border:2px solid #2d69c7;box-shadow:inset 0 0 5px rgba(45,110,215,.38)"></div>
<svg style="left:2270px;top:920px" width="350" height="48" viewBox="2270 920 350 48"><path d="M2282.7 950V934.5C2282.7 932.3 2284 931.2 2286 931.2H2299" fill="none" stroke="#616161" stroke-width="3.1" stroke-linecap="round" stroke-linejoin="round"/><rect x="2288.6" y="936.9" width="16" height="19.4" rx="1.8" fill="none" stroke="#616161" stroke-width="3.1" stroke-linecap="round" stroke-linejoin="round"/><path d="M2296.6 942.8V950M2293 946.4H2300.2" fill="none" stroke="#616161" stroke-width="2.1" stroke-linecap="round"/><path d="M2353.9 956.3V933M2342.2 944.3L2353.9 932.6L2365.6 944.3" fill="none" stroke="#616161" stroke-width="3.1" stroke-linecap="round" stroke-linejoin="round"/><path d="M2413.7 931.6V955M2402 943.4L2413.7 955.1L2425.4 943.4" fill="none" stroke="#616161" stroke-width="3.1" stroke-linecap="round" stroke-linejoin="round"/><path d="M2473.7 932.4V944M2467.9 938.2H2479.5" fill="none" stroke="#616161" stroke-width="3.1" stroke-linecap="round" stroke-linejoin="round"/><rect x="2462" y="948.4" width="23.6" height="7.4" rx="1.6" fill="none" stroke="#616161" stroke-width="3.1" stroke-linecap="round" stroke-linejoin="round"/><rect x="2521.9" y="934" width="23.8" height="7.6" rx="1.6" fill="none" stroke="#616161" stroke-width="3.1" stroke-linecap="round" stroke-linejoin="round"/><path d="M2533.9 946.6V958.2M2528.1 952.4H2539.7" fill="none" stroke="#616161" stroke-width="3.1" stroke-linecap="round" stroke-linejoin="round"/></svg>
<svg style="left:2578.0px;top:928.0px" width="32" height="32" viewBox="0 0 24 24" ><path d="M6 19c0 1.1.9 2 2 2h8c1.1 0 2-.9 2-2V7H6v12zM19 4h-3.5l-1-1h-5l-1 1H5v2h14V4z" fill="#616161" /></svg>
<div class="a" style="left:134px;top:1473px;width:2568px;height:50px;background:#eeeeee;border-bottom:2px solid #c4c4c4"></div>
<div class="a" style="left:134px;top:1473px;width:431px;height:50px;background:#fff;border-right:2px solid #c4c4c4"></div>
<div class="a" style="left:132px;top:1473px;width:2px;height:175px;background:#bdbdbd"></div>
<svg style="left:149.9px;top:1483.1px" width="28.6" height="28.6" viewBox="0 0 24 24" ><path d="M19 5v14H5V5h14m1.1-2H3.9c-.5 0-.9.4-.9.9v16.2c0 .4.4.9.9.9h16.2c.4 0 .9-.5.9-.9V3.9c0-.5-.5-.9-.9-.9zM11 7h6v2h-6V7zm0 4h6v2h-6v-2zm0 4h6v2h-6zM7 7h2v2H7zm0 4h2v2H7zm0 4h2v2H7z" fill="#616161" /></svg>
<span class="t" id="t38" style="left:186.3px;top:1483.7px;font:400 26px/31px 'Liberation Sans',sans-serif;color:#212121;letter-spacing:0.51px;width:329.5px;overflow:hidden;">Log: Delta_sw_testing/delta</span>
<svg style="left:523.2px;top:1488.6px" width="18" height="18" viewBox="0 0 18 18"><path d="M0.5 0.5L17.5 17.5M17.5 0.5L0.5 17.5" stroke="#555" stroke-width="2.4" fill="none"/></svg>
<svg style="left:158.5px;top:1542.7px" width="19" height="19" viewBox="0 0 19 19"><path d="M9.5 0V19M0 9.5H19" stroke="#616161" stroke-width="2.4" fill="none"/></svg>
<span class="t" id="t39" style="left:187.8px;top:1535.7px;font:400 26px/31px 'Liberation Sans',sans-serif;color:#212121;letter-spacing:0.80px;">Add Checkpoint</span>
<svg style="left:410px;top:1536px" width="32" height="32" viewBox="410 1536 32 32"><circle cx="425.8" cy="1552" r="12.2" fill="none" stroke="#616161" stroke-width="2.4"/><path d="M417.2 1543.4L434.4 1560.6" stroke="#616161" stroke-width="2.4"/></svg>
<span class="t" id="t40" style="left:445.4px;top:1535.7px;font:400 26px/31px 'Liberation Sans',sans-serif;color:#212121;letter-spacing:0.45px;">Clear Log</span>
<span class="t" id="t41" style="left:587.4px;top:1535.7px;font:400 26px/31px 'Liberation Sans',sans-serif;color:#212121;letter-spacing:0.33px;">Log Level:</span>
<span class="t" id="t42" style="left:733.4px;top:1535.7px;font:400 26px/31px 'Liberation Sans',sans-serif;color:#212121;letter-spacing:0.86px;">Warning</span>
<svg style="left:854.3px;top:1536.5px" width="32" height="32" viewBox="0 0 18 18" ><path d="M5.2,5.9L9,9.7l3.8-3.8l1.2,1.2l-4.9,5l-4.9-5L5.2,5.9z" fill="#616161" /></svg>
<div class="a" style="left:134px;top:1579px;width:2568px;height:2px;background:#bdbdbd"></div>
<div class="a" style="left:134px;top:1581px;width:2568px;height:4px;background:linear-gradient(rgba(0,0,0,.08),rgba(0,0,0,0))"></div>
<span class="t" id="t43" style="left:143.4px;top:1592.3px;font:400 26px/31px 'Liberation Sans',sans-serif;color:#ababab;letter-spacing:0.53px;">No log messages.</span>
<div class="a" style="left:134px;top:1646px;width:2568px;height:2px;background:#c0c0c0"></div>
<span class="t" id="t44" style="left:126.9px;top:1657.3px;font:400 26px/31px 'Liberation Sans',sans-serif;color:#212121;letter-spacing:0.75px;">Simple</span>
<div class="a" style="left:220.2px;top:1655px;width:69.8px;height:32px;background:#bcbcbc;border-radius:16px"></div>
<div class="a" style="left:225.7px;top:1661px;width:20.4px;height:20.4px;background:#fff;border-radius:50%"></div>
<span class="t" id="t45" style="left:346.9px;top:1657.3px;font:400 26px/31px 'Liberation Sans',sans-serif;color:#212121;">0</span>
<div class="a" style="left:385px;top:1659px;width:30.2px;height:30px;background:#424242"></div>
<span class="t" id="t46" style="left:388.8px;top:1664.3px;font:400 19.5px/23px 'Liberation Sans',sans-serif;color:#f4f4f4;">$</span>
<div class="a" style="left:400.3px;top:1682px;width:7.9px;height:2.2px;background:#f4f4f4"></div>
<span class="t" id="t47" style="left:433.2px;top:1657.3px;font:400 26px/31px 'Liberation Sans',sans-serif;color:#212121;">1</span>
<svg style="left:463.8px;top:1653.5px" width="36.5" height="36.5" viewBox="0 0 24 24" ><path d="M15 9H9v6h6V9zm-2 4h-2v-2h2v2zm8-2V9h-2V7c0-1.1-.9-2-2-2h-2V3h-2v2h-2V3H9v2H7c-1.1 0-2 .9-2 2v2H3v2h2v2H3v2h2v2c0 1.1.9 2 2 2h2v2h2v-2h2v2h2v-2h2c1.1 0 2-.9 2-2v-2h2v-2h-2v-2h2zm-4 6H7V7h10v10z" fill="#4a4a4a" /></svg>
<span class="t" id="t48" style="left:532.9px;top:1657.3px;font:400 26px/31px 'Liberation Sans',sans-serif;color:#212121;letter-spacing:0.65px;">R [conda env:.conda-mynewenv] | Idle</span>
<span class="t" id="t49" style="left:2152.7px;top:1657.7px;font:400 26px/31px 'Liberation Sans',sans-serif;color:#212121;letter-spacing:0.61px;">Mode: Edit</span>
<svg style="left:2319px;top:1656px" width="32" height="30" viewBox="0 0 32 30"><path d="M16 2C11 4.3 6.5 5.6 2.6 6.2C2 16 6 24 16 28C26 24 30 16 29.4 6.2C25.5 5.6 21 4.3 16 2z" fill="none" stroke="#424242" stroke-width="2.6" stroke-linejoin="round"/><path d="M10.9 9.9L21.1 20.1M21.1 9.9L10.9 20.1" stroke="#424242" stroke-width="2.9" fill="none"/></svg>
<span class="t" id="t50" style="left:2386.8px;top:1657.7px;font:400 26px/31px 'Liberation Sans',sans-serif;color:#212121;letter-spacing:-0.25px;">Ln 1, Col 1</span>
<span class="t" id="t51" style="left:2540.4px;top:1657.7px;font:400 26px/31px 'Liberation Sans',sans-serif;color:#212121;letter-spacing:1.26px;">for-loop-r.ipynb</span>
</div></div></body></html>
